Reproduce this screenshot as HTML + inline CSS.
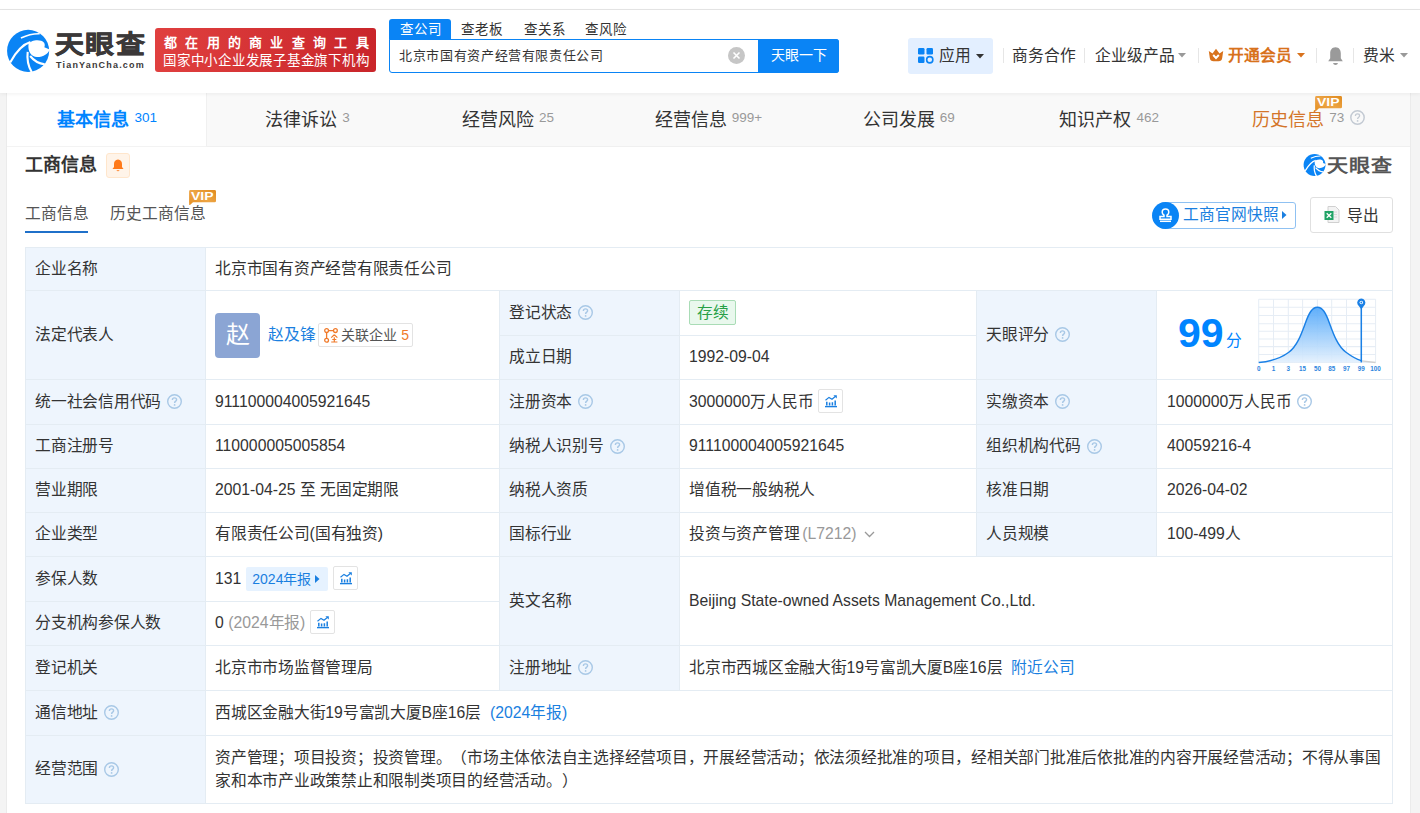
<!DOCTYPE html>
<html lang="zh-CN"><head><meta charset="utf-8">
<style>
*{margin:0;padding:0;box-sizing:border-box}
html,body{text-spacing-trim:space-all;width:1420px;height:813px;overflow:hidden;background:#fff;font-family:"Liberation Sans",sans-serif;color:#333}
.a{position:absolute}
.t{position:absolute;white-space:nowrap;line-height:1}
#topline{left:0;top:9px;width:1420px;height:1px;background:#e6e6e6}
#hdr{left:0;top:10px;width:1420px;height:83px;background:#fff;z-index:2;box-shadow:0 1px 4px rgba(0,0,0,.06)}
#graybg{left:0;top:93px;width:1420px;height:720px;background:#f4f4f4}
#card{left:6px;top:93px;width:1405px;height:720px;background:#fff;border-left:1px solid #ebebeb;border-right:1px solid #ebebeb}
#tabbar{left:7px;top:93px;width:1403px;height:54px;background:#f9f9f9;border-bottom:1px solid #f0f0f0}
#tab1{left:7px;top:93px;width:200px;height:54px;background:#fff;border-right:1px solid #f0f0f0;border-bottom:1px solid #f3f3f3}
.tab{position:absolute;top:91px;height:53px;width:200.4px;display:flex;align-items:center;justify-content:center;font-size:18px;color:#333}
.tab .n{font-size:13.5px;color:#999;margin-left:5px}
.cell{position:absolute;border-right:1px solid #e4ecf3;border-bottom:1px solid #e4ecf3}
.lab{background:#eef5fd}
.ct{position:absolute;white-space:nowrap;font-size:15.75px;line-height:16px;color:#333}
.q{display:inline-block;width:15px;height:15px;border:1.3px solid #b5d0ea;border-radius:50%;color:#a9c7e6;font-size:11px;line-height:12px;text-align:center;vertical-align:middle}
.cc{position:absolute;display:flex;align-items:center;white-space:nowrap;font-size:15.75px;line-height:16px;color:#333}
.qi{margin-left:6px;flex:none}
.chb{position:relative;top:-1px;display:inline-flex;align-items:center;justify-content:center;width:25px;height:24px;border:1px solid #e3e3e3;border-radius:2px;margin-left:5px;background:#fff}
.av{position:relative;top:0.5px;display:inline-flex;align-items:center;justify-content:center;width:45px;height:45px;border-radius:4px;background:#8ba5d4;color:#fff;font-size:24px;line-height:1}
.rel{position:relative;top:0.5px;display:inline-flex;align-items:center;height:24.5px;border:1px solid #e3e3e3;border-radius:2px;padding:0 3px 0 5px;margin-left:3px;font-size:14px;color:#555}
.tag{display:inline-flex;align-items:center;justify-content:center;width:47px;height:25px;border:1px solid #a9dcb6;background:#e9f8ed;color:#27a046;border-radius:2px}
.nb{display:inline-flex;align-items:center;height:24px;font-size:14px;padding:0 8px 0 6.5px;background:#e6f2ff;color:#1a7fe0;margin-left:4.5px;border-radius:2px}
.z{letter-spacing:-0.25px}
</style></head><body>
<div id="topline" class="a"></div>
<div id="graybg" class="a"></div>
<div id="card" class="a"></div>
<div id="tabbar" class="a"></div>
<div id="tab1" class="a"></div>
<div id="hdr" class="a"></div>

<!-- logo -->
<svg class="a" style="left:4px;top:26px;z-index:3" width="50" height="50" viewBox="0 0 813 813">
<circle cx="392" cy="405" r="342" fill="#0a84f5"/>
<path d="M398 298 C430 232 590 205 652 272 C668 298 664 325 656 345 C690 358 718 370 745 382 C715 450 650 505 535 505 C450 500 385 425 398 298 Z" fill="#fff"/>
<path d="M100 592 C190 432 300 300 430 262" stroke="#fff" stroke-width="34" fill="none"/>
<path d="M275 195 C380 145 480 122 580 125" stroke="#fff" stroke-width="24" fill="none"/>
<path d="M385 420 C368 560 398 662 452 752" stroke="#fff" stroke-width="34" fill="none"/>
<path d="M425 488 C500 582 580 614 662 624" stroke="#fff" stroke-width="34" fill="none"/>
</svg>
<div class="t" style="left:55px;top:28px;z-index:3;font-size:29px;font-weight:900;color:#3b3838;-webkit-text-stroke:0.7px #3b3838;letter-spacing:1.3px;transform:scaleY(0.88);transform-origin:0 100%">天眼查</div>
<div class="t" style="left:56px;top:61px;z-index:3;font-size:9px;font-weight:bold;color:#3b3838;letter-spacing:1.18px">TianYanCha.com</div>
<!-- red banner -->
<div class="a" style="left:155px;top:28px;width:221px;height:44px;z-index:3;border-radius:3px;background:linear-gradient(90deg,#e0403f,#c9252a)"></div>
<div class="t" style="left:164px;top:36px;z-index:4;font-size:13px;color:#fff;letter-spacing:8.3px;font-weight:bold">都在用的商业查询工具</div>
<div class="t" style="left:163px;top:54px;z-index:4;font-size:13.5px;color:#fff;letter-spacing:0.75px">国家中小企业发展子基金旗下机构</div>
<!-- search -->
<div class="a" style="left:389px;top:19px;width:62px;height:21px;z-index:3;background:#0a84f5;border-radius:3px 3px 0 0"></div>
<div class="t" style="left:400px;top:23px;z-index:4;font-size:13.5px;letter-spacing:1px;color:#fff">查公司</div>
<div class="t" style="left:461px;top:23px;z-index:4;font-size:13.5px;letter-spacing:1px;color:#333">查老板</div>
<div class="t" style="left:524px;top:23px;z-index:4;font-size:13.5px;letter-spacing:1px;color:#333">查关系</div>
<div class="t" style="left:585px;top:23px;z-index:4;font-size:13.5px;letter-spacing:1px;color:#333">查风险</div>
<div class="a" style="left:389px;top:39px;width:450px;height:34px;z-index:3;border:1px solid #0a84f5;border-radius:0 3px 3px 3px;background:#fff"></div>
<div class="a" style="left:758px;top:39px;width:81px;height:34px;z-index:3;background:#0a84f5;border-radius:0 3px 3px 0"></div>
<div class="t" style="left:399px;top:49px;z-index:4;font-size:13px;letter-spacing:0.65px;color:#333">北京市国有资产经营有限责任公司</div>
<div class="a" style="left:728px;top:47px;width:17px;height:17px;z-index:4;border-radius:50%;background:#c6c6c6"></div>
<svg class="a" style="left:728px;top:47px;z-index:5" width="17" height="17"><path d="M5.5 5.5 L11.5 11.5 M11.5 5.5 L5.5 11.5" stroke="#fff" stroke-width="1.6"/></svg>
<div class="t" style="left:771px;top:48px;z-index:4;font-size:14px;color:#fff;letter-spacing:0px">天眼一下</div>
<!-- right nav -->
<div class="a" style="left:908px;top:38px;width:85px;height:36px;z-index:3;background:#e3efff;border-radius:3px"></div>
<svg class="a" style="left:918px;top:48px;z-index:4" width="16" height="16"><rect x="0" y="0" width="6.5" height="6.5" rx="1.2" fill="#0a84f5"/><rect x="8.5" y="0" width="6.5" height="6.5" rx="1.2" fill="#0a84f5"/><rect x="0" y="8.5" width="6.5" height="6.5" rx="1.2" fill="#0a84f5"/><circle cx="11.75" cy="11.75" r="3.1" fill="none" stroke="#0a84f5" stroke-width="1.6"/></svg>
<div class="t" style="left:939px;top:48px;z-index:4;font-size:15.75px;color:#333">应用</div>
<svg class="a" style="left:976px;top:54px;z-index:4" width="8" height="5"><path d="M0 0 L8 0 L4 4.5Z" fill="#333"/></svg>
<div class="a" style="left:1003px;top:48px;width:1px;height:15px;z-index:4;background:#e6e6e6"></div>
<div class="t" style="left:1012px;top:48px;z-index:4;font-size:15.75px;color:#333">商务合作</div>
<div class="a" style="left:1084px;top:48px;width:1px;height:15px;z-index:4;background:#e6e6e6"></div>
<div class="t" style="left:1095px;top:48px;z-index:4;font-size:15.75px;color:#333">企业级产品</div>
<svg class="a" style="left:1178px;top:53px;z-index:4" width="8" height="5"><path d="M0 0 L8 0 L4 4.5Z" fill="#999"/></svg>
<div class="a" style="left:1198px;top:48px;width:1px;height:15px;z-index:4;background:#e6e6e6"></div>
<svg class="a" style="left:1208px;top:48px;z-index:4" width="16" height="14" viewBox="0 0 16 14"><path d="M0.8 3 L4.5 5.5 L8 0.8 L11.5 5.5 L15.2 3 L14.2 10 Q13.7 13.2 10.5 13.2 H5.5 Q2.3 13.2 1.8 10 Z" fill="#d8721c"/><path d="M5.2 7 L8 10 L10.8 7" stroke="#fff" stroke-width="1.9" fill="none"/></svg>
<div class="t" style="left:1228px;top:48px;z-index:4;font-size:15.75px;color:#d8721c;font-weight:bold">开通会员</div>
<svg class="a" style="left:1297px;top:53px;z-index:4" width="8" height="5"><path d="M0 0 L8 0 L4 4.5Z" fill="#d8721c"/></svg>
<div class="a" style="left:1316px;top:48px;width:1px;height:15px;z-index:4;background:#e6e6e6"></div>
<svg class="a" style="left:1327px;top:46px;z-index:4" width="17" height="20" viewBox="0 0 17 20"><path d="M8.5 1.2 C12.2 1.2 13.8 4.2 13.8 7.3 L13.8 12.3 L15.8 15.2 L1.2 15.2 L3.2 12.3 L3.2 7.3 C3.2 4.2 4.8 1.2 8.5 1.2Z" fill="#9a9a9a"/><path d="M6 17 H11 Q10.5 19 8.5 19 Q6.5 19 6 17Z" fill="#9a9a9a"/></svg>
<div class="a" style="left:1353px;top:48px;width:1px;height:15px;z-index:4;background:#e6e6e6"></div>
<div class="t" style="left:1363px;top:48px;z-index:4;font-size:15.75px;color:#333">费米</div>
<svg class="a" style="left:1400px;top:53px;z-index:4" width="8" height="5"><path d="M0 0 L8 0 L4 4.5Z" fill="#999"/></svg>

<!-- tabs -->
<div class="tab" style="left:7px;color:#0084ff;font-weight:bold"><span>基本信息</span><span class="n" style="color:#0084ff;font-weight:normal">301</span></div>
<div class="tab" style="left:207.4px"><span>法律诉讼</span><span class="n">3</span></div>
<div class="tab" style="left:407.8px"><span>经营风险</span><span class="n">25</span></div>
<div class="tab" style="left:608.2px"><span>经营信息</span><span class="n">999+</span></div>
<div class="tab" style="left:808.6px"><span>公司发展</span><span class="n">69</span></div>
<div class="tab" style="left:1009px"><span>知识产权</span><span class="n">462</span></div>
<div class="tab" style="left:1208.6px;color:#d4752a"><span>历史信息</span><span class="n">73</span><svg style="margin-left:6px" width="15" height="15" viewBox="0 0 15 15"><circle cx="7.5" cy="7.5" r="6.7" fill="none" stroke="#c3cad3" stroke-width="1.5"/><path d="M5.4 5.9 C5.4 4.5 6.3 3.9 7.5 3.9 C8.7 3.9 9.6 4.6 9.6 5.7 C9.6 7.1 7.6 7.2 7.6 8.9" fill="none" stroke="#c3cad3" stroke-width="1.3"/><circle cx="7.6" cy="10.9" r="0.85" fill="#c3cad3"/></svg></div>
<!-- section title -->
<div class="t" style="left:25px;top:156px;font-size:18px;font-weight:bold;color:#333">工商信息</div>
<div class="a" style="left:106px;top:153px;width:24px;height:25px;background:#fff4e9;border:1px solid #ffe6cc;border-radius:3px"></div>
<svg class="a" style="left:111px;top:158px" width="14" height="15" viewBox="0 0 14 15"><path d="M7 1.5 C9.8 1.5 11 3.8 11 6 L11 9 L12.5 11 L1.5 11 L3 9 L3 6 C3 3.8 4.2 1.5 7 1.5Z" fill="#ff7a1a"/><path d="M5.3 12.3 Q7 14.3 8.7 12.3Z" fill="#ff7a1a"/></svg>
<!-- small logo right -->
<svg class="a" style="left:1301.5px;top:152.3px" width="26" height="26" viewBox="0 0 813 813">
<circle cx="392" cy="405" r="342" fill="#0a84f5"/>
<path d="M398 298 C430 232 590 205 652 272 C668 298 664 325 656 345 C690 358 718 370 745 382 C715 450 650 505 535 505 C450 500 385 425 398 298 Z" fill="#fff"/>
<path d="M100 592 C190 432 300 300 430 262" stroke="#fff" stroke-width="40" fill="none"/>
<path d="M275 195 C380 145 480 122 580 125" stroke="#fff" stroke-width="32" fill="none"/>
<path d="M385 420 C368 560 398 662 452 752" stroke="#fff" stroke-width="40" fill="none"/>
<path d="M425 488 C500 582 580 614 662 624" stroke="#fff" stroke-width="40" fill="none"/>
</svg>
<div class="t" style="left:1327px;top:155px;font-size:21px;font-weight:bold;color:#555;letter-spacing:1.2px;transform:scaleY(0.87);transform-origin:0 60%">天眼查</div>
<!-- subtabs -->
<div class="t" style="left:25px;top:206px;font-size:15.75px;color:#555">工商信息</div>
<div class="a" style="left:25px;top:230.5px;width:63px;height:2.5px;background:#1f70c9"></div>
<div class="t" style="left:110px;top:206px;font-size:15.75px;color:#555">历史工商信息</div>
<svg class="a" style="left:188px;top:189px" width="29" height="16" viewBox="0 0 29 16"><defs><linearGradient id="vg" x1="0" y1="1" x2="1" y2="0"><stop offset="0" stop-color="#e48e22"/><stop offset="0.5" stop-color="#eda545"/><stop offset="1" stop-color="#e08a1e"/></linearGradient></defs><path d="M2.6 1 H26.6 Q28 1 28 2.4 V11.9 Q28 13.3 26.6 13.3 H5 L1.3 16.6 L1.1 13 V2.4 Q1.1 1 2.6 1Z" fill="url(#vg)"/><text x="3" y="11.2" textLength="22.5" lengthAdjust="spacingAndGlyphs" font-family="Liberation Sans" font-weight="bold" font-size="11.5" fill="#fff">VIP</text></svg>
<svg class="a" style="left:1314px;top:95px" width="29" height="16" viewBox="0 0 29 16"><defs><linearGradient id="vg" x1="0" y1="1" x2="1" y2="0"><stop offset="0" stop-color="#e48e22"/><stop offset="0.5" stop-color="#eda545"/><stop offset="1" stop-color="#e08a1e"/></linearGradient></defs><path d="M2.6 1 H26.6 Q28 1 28 2.4 V11.9 Q28 13.3 26.6 13.3 H5 L1.3 16.6 L1.1 13 V2.4 Q1.1 1 2.6 1Z" fill="url(#vg)"/><text x="3" y="11.2" textLength="22.5" lengthAdjust="spacingAndGlyphs" font-family="Liberation Sans" font-weight="bold" font-size="11.5" fill="#fff">VIP</text></svg>
<!-- snapshot button -->
<div class="a" style="left:1160px;top:202px;width:136px;height:27px;border:1px solid #8fc1f2;border-radius:3px;background:#fff"></div>
<div class="a" style="left:1152px;top:202px;width:27px;height:27px;border-radius:50%;background:#0a84f5"></div>
<svg class="a" style="left:1157px;top:207px" width="17" height="17" viewBox="0 0 17 17"><path d="M8.5 2 C10.6 2 11.8 3.5 11.8 5.2 C11.8 6.6 10.8 7.6 10 8.2 L10 9.6 L14 9.6 L14 12.2 L3 12.2 L3 9.6 L7 9.6 L7 8.2 C6.2 7.6 5.2 6.6 5.2 5.2 C5.2 3.5 6.4 2 8.5 2Z" fill="none" stroke="#fff" stroke-width="1.5"/><path d="M3 14.3 H14" stroke="#fff" stroke-width="1.5"/></svg>
<div class="t" style="left:1183px;top:207px;font-size:15.75px;color:#1a7fe0">工商官网快照</div>
<svg class="a" style="left:1282px;top:211px" width="5" height="8"><path d="M0 0 L4.5 4 L0 8Z" fill="#1a7fe0"/></svg>
<!-- export -->
<div class="a" style="left:1310px;top:197px;width:83px;height:36px;border:1px solid #e0e0e0;border-radius:3px;background:#fff"></div>
<svg class="a" style="left:1324px;top:206px" width="16" height="17" viewBox="0 0 16 17"><path d="M4 0.5 H11.5 L15 4 V16.5 H4Z" fill="#f3f3f3" stroke="#d0d0d0" stroke-width="1"/><path d="M10 6 H13 M10 8.5 H13 M10 11 H13" stroke="#d8d8d8" stroke-width="1"/><rect x="0.5" y="5" width="9" height="9" fill="#21a366"/><path d="M2.7 7.2 L7.3 11.8 M7.3 7.2 L2.7 11.8" stroke="#fff" stroke-width="1.3"/></svg>
<div class="t" style="left:1347px;top:208px;font-size:15.75px;color:#333">导出</div>
<!-- table -->
<div class="a" style="left:25px;top:247px;width:1368px;height:557px;border-left:1px solid #e4ecf3;border-top:1px solid #e4ecf3"></div>
<div class="cell lab" style="left:26px;top:248px;width:180px;height:43px"></div>
<div class="cell" style="left:206px;top:248px;width:1187px;height:43px"></div>
<div class="cell lab" style="left:26px;top:291px;width:180px;height:89px"></div>
<div class="cell" style="left:206px;top:291px;width:294px;height:89px"></div>
<div class="cell lab" style="left:500px;top:291px;width:180px;height:45px"></div>
<div class="cell" style="left:680px;top:291px;width:297px;height:45px"></div>
<div class="cell lab" style="left:500px;top:336px;width:180px;height:44px"></div>
<div class="cell" style="left:680px;top:336px;width:297px;height:44px"></div>
<div class="cell lab" style="left:977px;top:291px;width:180px;height:89px"></div>
<div class="cell" style="left:1157px;top:291px;width:236px;height:89px"></div>
<div class="cell lab" style="left:26px;top:380px;width:180px;height:45px"></div>
<div class="cell" style="left:206px;top:380px;width:294px;height:45px"></div>
<div class="cell lab" style="left:500px;top:380px;width:180px;height:45px"></div>
<div class="cell" style="left:680px;top:380px;width:297px;height:45px"></div>
<div class="cell lab" style="left:977px;top:380px;width:180px;height:45px"></div>
<div class="cell" style="left:1157px;top:380px;width:236px;height:45px"></div>
<div class="cell lab" style="left:26px;top:425px;width:180px;height:44px"></div>
<div class="cell" style="left:206px;top:425px;width:294px;height:44px"></div>
<div class="cell lab" style="left:500px;top:425px;width:180px;height:44px"></div>
<div class="cell" style="left:680px;top:425px;width:297px;height:44px"></div>
<div class="cell lab" style="left:977px;top:425px;width:180px;height:44px"></div>
<div class="cell" style="left:1157px;top:425px;width:236px;height:44px"></div>
<div class="cell lab" style="left:26px;top:469px;width:180px;height:44px"></div>
<div class="cell" style="left:206px;top:469px;width:294px;height:44px"></div>
<div class="cell lab" style="left:500px;top:469px;width:180px;height:44px"></div>
<div class="cell" style="left:680px;top:469px;width:297px;height:44px"></div>
<div class="cell lab" style="left:977px;top:469px;width:180px;height:44px"></div>
<div class="cell" style="left:1157px;top:469px;width:236px;height:44px"></div>
<div class="cell lab" style="left:26px;top:513px;width:180px;height:44px"></div>
<div class="cell" style="left:206px;top:513px;width:294px;height:44px"></div>
<div class="cell lab" style="left:500px;top:513px;width:180px;height:44px"></div>
<div class="cell" style="left:680px;top:513px;width:297px;height:44px"></div>
<div class="cell lab" style="left:977px;top:513px;width:180px;height:44px"></div>
<div class="cell" style="left:1157px;top:513px;width:236px;height:44px"></div>
<div class="cell lab" style="left:26px;top:557px;width:180px;height:45px"></div>
<div class="cell" style="left:206px;top:557px;width:294px;height:45px"></div>
<div class="cell lab" style="left:26px;top:602px;width:180px;height:44px"></div>
<div class="cell" style="left:206px;top:602px;width:294px;height:44px"></div>
<div class="cell lab" style="left:500px;top:557px;width:180px;height:89px"></div>
<div class="cell" style="left:680px;top:557px;width:713px;height:89px"></div>
<div class="cell lab" style="left:26px;top:646px;width:180px;height:45px"></div>
<div class="cell" style="left:206px;top:646px;width:294px;height:45px"></div>
<div class="cell lab" style="left:500px;top:646px;width:180px;height:45px"></div>
<div class="cell" style="left:680px;top:646px;width:713px;height:45px"></div>
<div class="cell lab" style="left:26px;top:691px;width:180px;height:45px"></div>
<div class="cell" style="left:206px;top:691px;width:1187px;height:45px"></div>
<div class="cell lab" style="left:26px;top:736px;width:180px;height:68px"></div>
<div class="cell" style="left:206px;top:736px;width:1187px;height:68px"></div>
<div class="cc" style="left:35px;top:247px;height:43px;"><span class="z">企业名称</span></div>
<div class="cc" style="left:215px;top:247px;height:43px;"><span class="z">北京市国有资产经营有限责任公司</span></div>
<div class="cc" style="left:35px;top:290px;height:89px;"><span class="z">法定代表人</span></div>
<div class="cc" style="left:215px;top:290px;height:89px;"><span class="av"><span class="z">赵</span></span><span style="color:#1a7fe0;margin-left:8px"><span class="z">赵及锋</span></span><span class="rel"><svg width="14" height="15" viewBox="0 0 14 15"><circle cx="2.6" cy="2.6" r="1.9" fill="none" stroke="#f07a2a" stroke-width="1.3"/><circle cx="11.4" cy="2.6" r="1.9" fill="none" stroke="#f07a2a" stroke-width="1.3"/><circle cx="2.6" cy="12.2" r="1.9" fill="none" stroke="#f07a2a" stroke-width="1.3"/><path d="M4.5 2.6 H9.5 M2.6 4.5 V10.3" stroke="#f07a2a" stroke-width="1.3"/><path d="M10.3 6.8 L7.2 9.6 M10.3 6.8 L13.4 9.6 M10.3 9.2 V14 M8.3 11.5 H12.3 M7.2 14 H13.4" stroke="#f07a2a" stroke-width="1.2" fill="none"/></svg><span style="margin-left:3px"><span class="z">关联企业</span></span><span style="color:#f07a2a;margin-left:5px">5</span></span></div>
<div class="cc" style="left:509px;top:290px;height:45px;"><span class="z">登记状态</span><svg class="qi" width="15" height="15" viewBox="0 0 15 15"><circle cx="7.5" cy="7.5" r="6.8" fill="none" stroke="#a8c8e6" stroke-width="1.4"/><path d="M5.4 5.9 C5.4 4.5 6.3 3.9 7.5 3.9 C8.7 3.9 9.6 4.6 9.6 5.7 C9.6 7.1 7.6 7.2 7.6 8.9" fill="none" stroke="#a8c8e6" stroke-width="1.4"/><circle cx="7.6" cy="10.9" r="0.9" fill="#a8c8e6"/></svg></div>
<div class="cc" style="left:689px;top:290px;height:45px;"><span class="tag"><span class="z">存续</span></span></div>
<div class="cc" style="left:509px;top:335px;height:44px;"><span class="z">成立日期</span></div>
<div class="cc" style="left:689px;top:335px;height:44px;">1992-09-04</div>
<div class="cc" style="left:986px;top:290px;height:89px;"><span class="z">天眼评分</span><svg class="qi" width="15" height="15" viewBox="0 0 15 15"><circle cx="7.5" cy="7.5" r="6.8" fill="none" stroke="#a8c8e6" stroke-width="1.4"/><path d="M5.4 5.9 C5.4 4.5 6.3 3.9 7.5 3.9 C8.7 3.9 9.6 4.6 9.6 5.7 C9.6 7.1 7.6 7.2 7.6 8.9" fill="none" stroke="#a8c8e6" stroke-width="1.4"/><circle cx="7.6" cy="10.9" r="0.9" fill="#a8c8e6"/></svg></div>
<div class="cc" style="left:35px;top:379px;height:45px;"><span class="z">统一社会信用代码</span><svg class="qi" width="15" height="15" viewBox="0 0 15 15"><circle cx="7.5" cy="7.5" r="6.8" fill="none" stroke="#a8c8e6" stroke-width="1.4"/><path d="M5.4 5.9 C5.4 4.5 6.3 3.9 7.5 3.9 C8.7 3.9 9.6 4.6 9.6 5.7 C9.6 7.1 7.6 7.2 7.6 8.9" fill="none" stroke="#a8c8e6" stroke-width="1.4"/><circle cx="7.6" cy="10.9" r="0.9" fill="#a8c8e6"/></svg></div>
<div class="cc" style="left:215px;top:379px;height:45px;">911100004005921645</div>
<div class="cc" style="left:509px;top:379px;height:45px;"><span class="z">注册资本</span><svg class="qi" width="15" height="15" viewBox="0 0 15 15"><circle cx="7.5" cy="7.5" r="6.8" fill="none" stroke="#a8c8e6" stroke-width="1.4"/><path d="M5.4 5.9 C5.4 4.5 6.3 3.9 7.5 3.9 C8.7 3.9 9.6 4.6 9.6 5.7 C9.6 7.1 7.6 7.2 7.6 8.9" fill="none" stroke="#a8c8e6" stroke-width="1.4"/><circle cx="7.6" cy="10.9" r="0.9" fill="#a8c8e6"/></svg></div>
<div class="cc" style="left:689px;top:379px;height:45px;">3000000<span class="z">万人民币</span><span class="chb"><svg width="14" height="14" viewBox="0 0 14 14"><path d="M1 12.6 H13" stroke="#1a7fe0" stroke-width="1.4"/><path d="M2.8 11.5 V7.8 M5.6 11.5 V8.6 M8.4 11.5 V8.2 M11.2 11.5 V6.6" stroke="#1a7fe0" stroke-width="1.5"/><path d="M1.5 6.2 L5 3.4 L8 5.2 L11.6 2.2" fill="none" stroke="#1a7fe0" stroke-width="1.2"/><path d="M9.4 1.2 H12.8 V4.6Z" fill="#1a7fe0"/></svg></span></div>
<div class="cc" style="left:986px;top:379px;height:45px;"><span class="z">实缴资本</span><svg class="qi" width="15" height="15" viewBox="0 0 15 15"><circle cx="7.5" cy="7.5" r="6.8" fill="none" stroke="#a8c8e6" stroke-width="1.4"/><path d="M5.4 5.9 C5.4 4.5 6.3 3.9 7.5 3.9 C8.7 3.9 9.6 4.6 9.6 5.7 C9.6 7.1 7.6 7.2 7.6 8.9" fill="none" stroke="#a8c8e6" stroke-width="1.4"/><circle cx="7.6" cy="10.9" r="0.9" fill="#a8c8e6"/></svg></div>
<div class="cc" style="left:1167px;top:379px;height:45px;">1000000<span class="z">万人民币</span><svg class="qi" width="15" height="15" viewBox="0 0 15 15"><circle cx="7.5" cy="7.5" r="6.8" fill="none" stroke="#a8c8e6" stroke-width="1.4"/><path d="M5.4 5.9 C5.4 4.5 6.3 3.9 7.5 3.9 C8.7 3.9 9.6 4.6 9.6 5.7 C9.6 7.1 7.6 7.2 7.6 8.9" fill="none" stroke="#a8c8e6" stroke-width="1.4"/><circle cx="7.6" cy="10.9" r="0.9" fill="#a8c8e6"/></svg></div>
<div class="cc" style="left:35px;top:424px;height:44px;"><span class="z">工商注册号</span></div>
<div class="cc" style="left:215px;top:424px;height:44px;">110000005005854</div>
<div class="cc" style="left:509px;top:424px;height:44px;"><span class="z">纳税人识别号</span><svg class="qi" width="15" height="15" viewBox="0 0 15 15"><circle cx="7.5" cy="7.5" r="6.8" fill="none" stroke="#a8c8e6" stroke-width="1.4"/><path d="M5.4 5.9 C5.4 4.5 6.3 3.9 7.5 3.9 C8.7 3.9 9.6 4.6 9.6 5.7 C9.6 7.1 7.6 7.2 7.6 8.9" fill="none" stroke="#a8c8e6" stroke-width="1.4"/><circle cx="7.6" cy="10.9" r="0.9" fill="#a8c8e6"/></svg></div>
<div class="cc" style="left:689px;top:424px;height:44px;">911100004005921645</div>
<div class="cc" style="left:986px;top:424px;height:44px;"><span class="z">组织机构代码</span><svg class="qi" width="15" height="15" viewBox="0 0 15 15"><circle cx="7.5" cy="7.5" r="6.8" fill="none" stroke="#a8c8e6" stroke-width="1.4"/><path d="M5.4 5.9 C5.4 4.5 6.3 3.9 7.5 3.9 C8.7 3.9 9.6 4.6 9.6 5.7 C9.6 7.1 7.6 7.2 7.6 8.9" fill="none" stroke="#a8c8e6" stroke-width="1.4"/><circle cx="7.6" cy="10.9" r="0.9" fill="#a8c8e6"/></svg></div>
<div class="cc" style="left:1167px;top:424px;height:44px;">40059216-4</div>
<div class="cc" style="left:35px;top:468px;height:44px;"><span class="z">营业期限</span></div>
<div class="cc" style="left:215px;top:468px;height:44px;">2001-04-25&nbsp;<span class="z">至</span>&nbsp;<span class="z">无固定期限</span></div>
<div class="cc" style="left:509px;top:468px;height:44px;"><span class="z">纳税人资质</span></div>
<div class="cc" style="left:689px;top:468px;height:44px;"><span class="z">增值税一般纳税人</span></div>
<div class="cc" style="left:986px;top:468px;height:44px;"><span class="z">核准日期</span></div>
<div class="cc" style="left:1167px;top:468px;height:44px;">2026-04-02</div>
<div class="cc" style="left:35px;top:512px;height:44px;"><span class="z">企业类型</span></div>
<div class="cc" style="left:215px;top:512px;height:44px;"><span class="z">有限责任公司</span>(<span class="z">国有独资</span>)</div>
<div class="cc" style="left:509px;top:512px;height:44px;"><span class="z">国标行业</span></div>
<div class="cc" style="left:689px;top:512px;height:44px;"><span class="z">投资与资产管理</span><span style="color:#999;margin-left:3px">(L7212)</span><svg style="margin-left:7px" width="11" height="7" viewBox="0 0 11 7"><path d="M1 1 L5.5 5.5 L10 1" fill="none" stroke="#999" stroke-width="1.3"/></svg></div>
<div class="cc" style="left:986px;top:512px;height:44px;"><span class="z">人员规模</span></div>
<div class="cc" style="left:1167px;top:512px;height:44px;">100-499<span class="z">人</span></div>
<div class="cc" style="left:35px;top:556px;height:45px;"><span class="z">参保人数</span></div>
<div class="cc" style="left:215px;top:556px;height:45px;">131<span class="nb">2024<span class="z">年报</span><svg style="margin-left:4.5px" width="5" height="8"><path d="M0 0 L4.5 4 L0 8Z" fill="#1a7fe0"/></svg></span><span class="chb"><svg width="14" height="14" viewBox="0 0 14 14"><path d="M1 12.6 H13" stroke="#1a7fe0" stroke-width="1.4"/><path d="M2.8 11.5 V7.8 M5.6 11.5 V8.6 M8.4 11.5 V8.2 M11.2 11.5 V6.6" stroke="#1a7fe0" stroke-width="1.5"/><path d="M1.5 6.2 L5 3.4 L8 5.2 L11.6 2.2" fill="none" stroke="#1a7fe0" stroke-width="1.2"/><path d="M9.4 1.2 H12.8 V4.6Z" fill="#1a7fe0"/></svg></span></div>
<div class="cc" style="left:35px;top:601px;height:44px;"><span class="z">分支机构参保人数</span></div>
<div class="cc" style="left:215px;top:601px;height:44px;">0<span style="color:#999;margin-left:4.5px">(2024<span class="z">年报</span>)</span><span class="chb"><svg width="14" height="14" viewBox="0 0 14 14"><path d="M1 12.6 H13" stroke="#1a7fe0" stroke-width="1.4"/><path d="M2.8 11.5 V7.8 M5.6 11.5 V8.6 M8.4 11.5 V8.2 M11.2 11.5 V6.6" stroke="#1a7fe0" stroke-width="1.5"/><path d="M1.5 6.2 L5 3.4 L8 5.2 L11.6 2.2" fill="none" stroke="#1a7fe0" stroke-width="1.2"/><path d="M9.4 1.2 H12.8 V4.6Z" fill="#1a7fe0"/></svg></span></div>
<div class="cc" style="left:509px;top:556px;height:89px;"><span class="z">英文名称</span></div>
<div class="cc" style="left:689px;top:556px;height:89px;">Beijing State-owned Assets Management Co.,Ltd.</div>
<div class="cc" style="left:35px;top:645px;height:45px;"><span class="z">登记机关</span></div>
<div class="cc" style="left:215px;top:645px;height:45px;"><span class="z">北京市市场监督管理局</span></div>
<div class="cc" style="left:509px;top:645px;height:45px;"><span class="z">注册地址</span><svg class="qi" width="15" height="15" viewBox="0 0 15 15"><circle cx="7.5" cy="7.5" r="6.8" fill="none" stroke="#a8c8e6" stroke-width="1.4"/><path d="M5.4 5.9 C5.4 4.5 6.3 3.9 7.5 3.9 C8.7 3.9 9.6 4.6 9.6 5.7 C9.6 7.1 7.6 7.2 7.6 8.9" fill="none" stroke="#a8c8e6" stroke-width="1.4"/><circle cx="7.6" cy="10.9" r="0.9" fill="#a8c8e6"/></svg></div>
<div class="cc" style="left:689px;top:645px;height:45px;"><span class="z">北京市西城区金融大街</span>19<span class="z">号富凯大厦</span>B<span class="z">座</span>16<span class="z">层</span><span style="color:#1a7fe0;margin-left:9px"><span class="z">附近公司</span></span></div>
<div class="cc" style="left:35px;top:690px;height:45px;"><span class="z">通信地址</span><svg class="qi" width="15" height="15" viewBox="0 0 15 15"><circle cx="7.5" cy="7.5" r="6.8" fill="none" stroke="#a8c8e6" stroke-width="1.4"/><path d="M5.4 5.9 C5.4 4.5 6.3 3.9 7.5 3.9 C8.7 3.9 9.6 4.6 9.6 5.7 C9.6 7.1 7.6 7.2 7.6 8.9" fill="none" stroke="#a8c8e6" stroke-width="1.4"/><circle cx="7.6" cy="10.9" r="0.9" fill="#a8c8e6"/></svg></div>
<div class="cc" style="left:215px;top:690px;height:45px;"><span class="z">西城区金融大街</span>19<span class="z">号富凯大厦</span>B<span class="z">座</span>16<span class="z">层</span><span style="color:#1a7fe0;margin-left:9px">(2024<span class="z">年报</span>)</span></div>
<div class="cc" style="left:35px;top:735px;height:68px;"><span class="z">经营范围</span><svg class="qi" width="15" height="15" viewBox="0 0 15 15"><circle cx="7.5" cy="7.5" r="6.8" fill="none" stroke="#a8c8e6" stroke-width="1.4"/><path d="M5.4 5.9 C5.4 4.5 6.3 3.9 7.5 3.9 C8.7 3.9 9.6 4.6 9.6 5.7 C9.6 7.1 7.6 7.2 7.6 8.9" fill="none" stroke="#a8c8e6" stroke-width="1.4"/><circle cx="7.6" cy="10.9" r="0.9" fill="#a8c8e6"/></svg></div>
<div class="t" style="left:215px;top:750px;font-size:15.75px;line-height:16px;color:#333"><span class="z">资产管理；项目投资；投资管理。（市场主体依法自主选择经营项目，开展经营活动；依法须经批准的项目，经相关部门批准后依批准的内容开展经营活动；不得从事国</span></div>
<div class="t" style="left:215px;top:772.5px;font-size:15.75px;line-height:16px;color:#333"><span class="z">家和本市产业政策禁止和限制类项目的经营活动。）</span></div>
<div class="t" style="left:1178px;top:313px;font-size:41px;font-weight:bold;color:#0084ff;line-height:40px">99</div>
<div class="t" style="left:1226px;top:333px;font-size:15.75px;color:#0084ff">分</div>
<svg class="a" style="left:1250px;top:292px" width="135" height="83" viewBox="0 0 1322 813">
<defs><linearGradient id="bg1" x1="0" y1="0" x2="0" y2="1"><stop offset="0" stop-color="#4ea6fa"/><stop offset="1" stop-color="#e3f0fd"/></linearGradient></defs>
<g stroke="#e6edf5" stroke-width="10" fill="none"><path d="M85 72 V690" /><path d="M230 72 V690" /><path d="M375 72 V690" /><path d="M515 72 V690" /><path d="M660 72 V690" /><path d="M800 72 V690" /><path d="M945 72 V690" /><path d="M1090 72 V690" /><path d="M1230 72 V690" /><path d="M85 72 H1230" /><path d="M85 150 H1230" /><path d="M85 230 H1230" /><path d="M85 310 H1230" /><path d="M85 385 H1230" /><path d="M85 460 H1230" /><path d="M85 535 H1230" /><path d="M85 612 H1230" /><path d="M85 690 H1230" /></g>
<path d="M85 690 C200 680 300 650 380 590 C460 530 500 420 540 310 C580 200 610 150 660 150 C710 150 740 200 780 310 C820 420 860 530 940 590 C1000 635 1050 660 1090 672 L1090 690 Z" fill="url(#bg1)" fill-opacity="0.9"/>
<path d="M85 690 C200 680 300 650 380 590 C460 530 500 420 540 310 C580 200 610 150 660 150 C710 150 740 200 780 310 C820 420 860 530 940 590 C1000 635 1050 660 1090 672" fill="none" stroke="#1a80e6" stroke-width="14"/>
<path d="M1090 675 L1230 690" stroke="#d0d0d0" stroke-width="14"/>
<path d="M1090 130 V690" stroke="#1a80e6" stroke-width="15"/>
<path d="M1090 170 L1054 122 A40 40 0 1 1 1126 122 Z" fill="#1a80e6"/>
<circle cx="1090" cy="103" r="17" fill="#fff"/><circle cx="1090" cy="103" r="9" fill="#1a80e6"/>
<g font-family="Liberation Sans" font-size="62" fill="#2f86de" font-weight="bold" text-anchor="middle"><text x="85" y="770">0</text><text x="230" y="770">1</text><text x="375" y="770">3</text><text x="515" y="770">15</text><text x="660" y="770">50</text><text x="800" y="770">85</text><text x="945" y="770">97</text><text x="1090" y="770">99</text><text x="1230" y="770">100</text></g>
</svg>
</body></html>
